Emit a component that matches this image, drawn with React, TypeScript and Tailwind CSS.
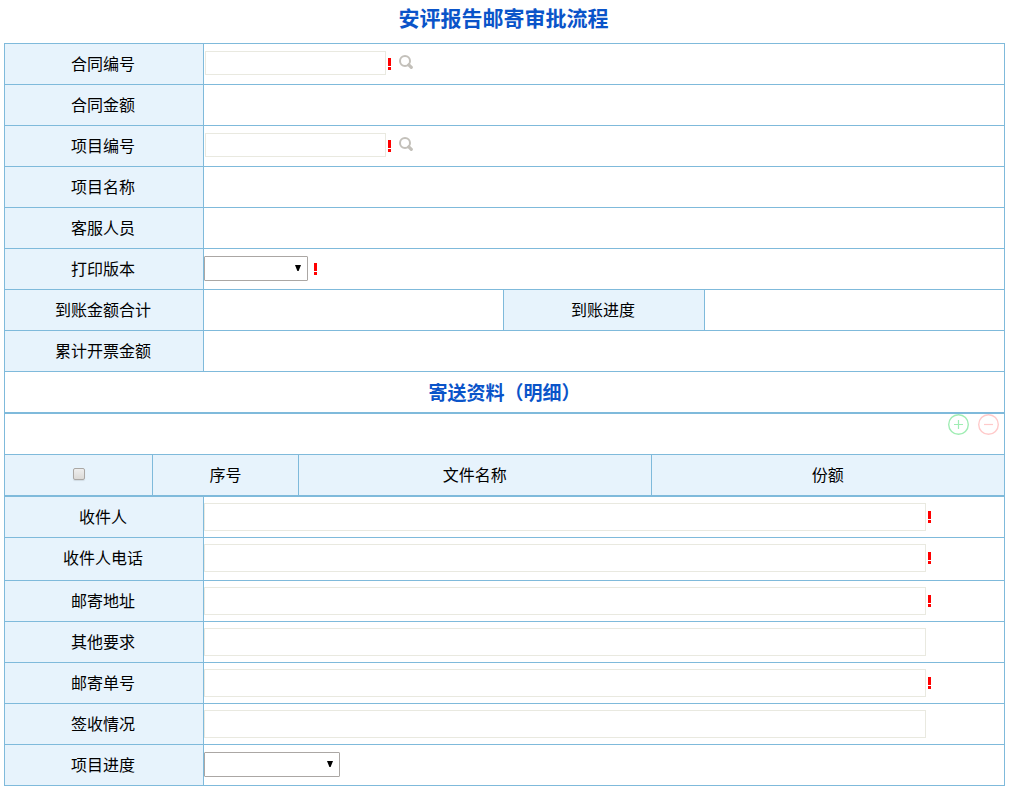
import React from 'react';

const LABEL = 'block pt-[7px] pr-[2px] text-center leading-6 bg-[#e7f3fc] border-r border-[#7fbadb]';
const ROW = 'grid grid-cols-[199fr_800fr] border-b border-[#7fbadb]';
const INPUT = 'border border-[#e9e9e0] bg-white px-1 outline-none';
const TH = 'border-[#7fbadb] p-0 pb-[2px] font-normal align-middle';

const TOP_ROWS = [
  { id: 'contract-no', label: '合同编号', kind: 'browse' },
  { id: 'contract-amount', label: '合同金额', kind: 'text' },
  { id: 'project-no', label: '项目编号', kind: 'browse' },
  { id: 'project-name', label: '项目名称', kind: 'text' },
  { id: 'service-staff', label: '客服人员', kind: 'text' },
];

const MAIL_ROWS = [
  { id: 'receiver', label: '收件人', required: true, height: 'h-[41px]' },
  { id: 'receiver-phone', label: '收件人电话', required: true, height: 'h-[43px]' },
  { id: 'address', label: '邮寄地址', required: true, height: 'h-[41px]' },
  { id: 'other', label: '其他要求', required: false, height: 'h-[41px]' },
  { id: 'tracking-no', label: '邮寄单号', required: true, height: 'h-[41px]' },
  { id: 'sign-status', label: '签收情况', required: false, height: 'h-[41px]' },
];

const Required: React.FC = () => (
  <svg className="w-[3px] h-3 mt-[14px] shrink-0" viewBox="0 0 3 12" fill="#ff0000" shapeRendering="crispEdges" aria-hidden="true">
    <rect width="3" height="8" />
    <rect y="9" width="3" height="3" />
  </svg>
);

const SearchIcon: React.FC = () => (
  <svg className="w-[14px] h-[14px]" viewBox="0 0 14 14" fill="none" stroke="#c3c0ba" aria-hidden="true">
    <circle cx="6" cy="6" r="5" strokeWidth="2" />
    <path d="M9.8 9.8L12.3 12.3" strokeWidth="3.2" strokeLinecap="round" />
  </svg>
);

const Dropdown: React.FC<{ id: string; width: string }> = ({ id, width }) => (
  <div className={`relative mt-[7px] h-[25px] ${width}`}>
    <select id={id} className="w-full h-full appearance-none bg-white border border-[#aba7a4] rounded-[1px] px-1 outline-none">
      <option value=""></option>
    </select>
    <svg className="absolute right-[7px] top-[9px] w-[6px] h-[6px] pointer-events-none" viewBox="0 0 6 6" aria-hidden="true">
      <path d="M0 0H6L3.6 6H2.4Z" fill="#000" />
    </svg>
  </div>
);

const App: React.FC = () => {
  return (
    <form className="min-h-screen bg-white pl-1 pr-[5px] pb-1 text-base text-black font-['Noto_Sans_CJK_SC',sans-serif]">
      <h1 className="h-[43px] pt-[2px] pr-[2px] text-center text-[21px] leading-[30px] font-bold text-[#0a54c9]">安评报告邮寄审批流程</h1>

      <div className="border-t border-x border-[#7fbadb]">
        {TOP_ROWS.map((row) => (
          <div key={row.id} className={`${ROW} h-[41px]`}>
            {row.kind === 'browse' ? (
              <label htmlFor={row.id} className={LABEL}>{row.label}</label>
            ) : (
              <div className={LABEL}>{row.label}</div>
            )}
            <div className="flex items-start">
              {row.kind === 'browse' && (
                <>
                  <input id={row.id} type="text" className={`${INPUT} w-[181px] h-6 mt-[7px] ml-px mr-[2px]`} />
                  <Required />
                  <button type="button" aria-label={row.label} className="mt-[11px] ml-2">
                    <SearchIcon />
                  </button>
                </>
              )}
            </div>
          </div>
        ))}

        <div className={`${ROW} h-[41px]`}>
          <label htmlFor="print-version" className={LABEL}>打印版本</label>
          <div className="flex items-start gap-[6px]">
            <Dropdown id="print-version" width="w-[104px]" />
            <Required />
          </div>
        </div>

        <div className="grid grid-cols-[199fr_300fr_201fr_299fr] h-[41px] border-b border-[#7fbadb]">
          <div className={LABEL}>到账金额合计</div>
          <div className="border-r border-[#7fbadb]"></div>
          <div className={LABEL}>到账进度</div>
          <div></div>
        </div>

        <div className={`${ROW} h-[41px]`}>
          <div className={LABEL}>累计开票金额</div>
          <div></div>
        </div>

        <h2 className="flex items-center justify-center h-[42px] border-b-2 border-[#7fbadb] text-[19px] font-bold text-[#0a54c9]">
          寄送资料（明细）
        </h2>

        <div className="flex items-start justify-end gap-[9px] h-[41px] pr-[5px]">
          <button type="button" aria-label="+">
            <svg className="w-[21px] h-[21px]" viewBox="0 0 21 21" fill="none" stroke="#a0edb4" aria-hidden="true">
              <circle cx="10.5" cy="10.5" r="9.8" strokeWidth="1.4" />
              <path d="M6 10.5H15M10.5 6V15" strokeWidth="1.2" />
            </svg>
          </button>
          <button type="button" aria-label="-">
            <svg className="w-[21px] h-[21px]" viewBox="0 0 21 21" fill="none" stroke="#ffcaca" aria-hidden="true">
              <circle cx="10.5" cy="10.5" r="9.8" strokeWidth="1.4" />
              <path d="M6 10.5H15" strokeWidth="1.2" />
            </svg>
          </button>
        </div>

        <table className="w-full h-[43px] -mt-px table-fixed border-separate border-spacing-0 bg-[#e7f3fc] border-t border-b-2 border-[#7fbadb]">
          <thead>
            <tr>
              <th className={`${TH} w-[148px] border-r`}>
                <input
                  type="checkbox"
                  aria-label="序号"
                  className="block mx-auto w-3 h-3 appearance-none rounded-[2px] border border-[#aaa7a4] bg-linear-to-b from-[#eeeeee] to-[#dcdad7] shadow-[0_1px_1px_rgba(0,0,0,0.1)]"
                />
              </th>
              <th className={`${TH} w-[146px] border-r`}>序号</th>
              <th className={`${TH} border-r`}>文件名称</th>
              <th className={TH}>份额</th>
            </tr>
          </thead>
        </table>

        {MAIL_ROWS.map((row) => (
          <div key={row.id} className={`${ROW} ${row.height}`}>
            <label htmlFor={row.id} className={LABEL}>{row.label}</label>
            <div className="flex items-start gap-[2px]">
              <input id={row.id} type="text" className={`${INPUT} w-[calc(90%+2px)] h-7 mt-[6px]`} />
              {row.required && <Required />}
            </div>
          </div>
        ))}

        <div className={`${ROW} h-[41px]`}>
          <label htmlFor="progress" className={LABEL}>项目进度</label>
          <div className="flex items-start">
            <Dropdown id="progress" width="w-[136px]" />
          </div>
        </div>
      </div>
    </form>
  );
};

export default App;
